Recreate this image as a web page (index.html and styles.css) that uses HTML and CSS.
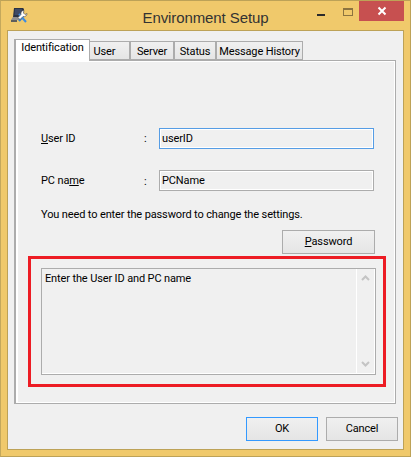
FILE: index.html
```html
<!DOCTYPE html>
<html lang="en">
<head>
<meta charset="utf-8">
<title>Environment Setup</title>
<link rel="stylesheet" href="styles.css">
</head>
<body>
<div class="window">
  <header class="titlebar">
    <svg class="app-icon" width="18" height="18" viewBox="0 0 18 18">
      <path d="M4 1h9l1 1-1 8H3z" fill="#2a3344"/>
      <path d="M5 2h7l-.8 6H4.400z" fill="#3d4a66"/>
      <path d="M3 10h8l-2 3H1z" fill="#8f8f8f"/>
      <path d="M1 13h6v2H1z" fill="#5d5d5d"/>
      <path d="M9 14 14 8" stroke="#2f7fd0" stroke-width="2.200" fill="none"/>
      <path d="M9 7l7 8" stroke="#3c8be0" stroke-width="2" fill="none"/>
      <path d="M14 3.500a3 3 0 0 0-3 4l-3 3 2 2 3-3a3 3 0 0 0 4-3l-2 1-1.500-1.500z" fill="#fff" stroke="#444" stroke-width=".6"/>
    </svg>
    <h1 class="title">Environment Setup</h1>
    <div class="controls">
      <span class="ctl"><span class="min"></span></span>
      <span class="ctl"><span class="max"></span></span>
      <span class="close">
        <svg width="10" height="10" viewBox="0 0 10 10"><path d="M1.500 1.500l7 7M8.500 1.500l-7 7" stroke="#fff" stroke-width="2"/></svg>
      </span>
    </div>
  </header>
  <main class="client">
    <nav class="tabs">
      <span class="tab active">Identification</span>
      <span class="tab t-user">User</span>
      <span class="tab t-server">Server</span>
      <span class="tab t-status">Status</span>
      <span class="tab t-msg">Message History</span>
    </nav>
    <section class="panel">
      <div class="form">
        <label class="lbl"><u>U</u>ser ID</label>
        <span class="colon">:</span>
        <div class="field focus">userID</div>
        <label class="lbl"><span>PC na<u>m</u>e</span></label>
        <span class="colon colon-low">:</span>
        <div class="field">PCName</div>
      </div>
      <p class="note">You need to enter the password to change the settings.</p>
      <div class="pw-row"><button class="btn pw"><u>P</u>assword</button></div>
      <div class="message">
        <div class="msg-text">Enter the User ID and PC name</div>
        <div class="scroll">
          <svg width="9" height="7" viewBox="0 0 9 7"><path d="M1 5l3.500-3.500L8 5" stroke="#c4c4c4" stroke-width="2" fill="none"/></svg>
          <svg width="9" height="7" viewBox="0 0 9 7"><path d="M1 2l3.500 3.500L8 2" stroke="#c4c4c4" stroke-width="2" fill="none"/></svg>
        </div>
      </div>
      <div class="highlight"></div>
    </section>
    <footer class="footer">
      <button class="btn ok">OK</button>
      <button class="btn">Cancel</button>
    </footer>
  </main>
</div>
</body>
</html>
```
FILE: styles.css
```css
* { box-sizing: border-box; }
html, body { margin: 0; padding: 0; background: #f0c96b; }
body { width: 411px; height: 457px; overflow: hidden; font-family: Roboto, "Liberation Sans", Arial, sans-serif; font-size: 11px; letter-spacing: -0.13px; color: #000; }
.window { width: 411px; height: 457px; border: 1px solid #bda257; border-left-color: #c4a85c; background: #f0c96b; display: flex; flex-direction: column; padding: 0 6px 6px 6px; }
.titlebar { height: 29px; display: flex; align-items: flex-start; position: relative; flex: none; }
.app-icon { margin: 6px 0 0 3px; flex: none; }
.title { flex: 1; margin: 7px 0 0 0; padding-left: 78px; text-align: center; font-weight: normal; font-size: 15px; line-height: 20px; font-family: "Liberation Sans", Arial, sans-serif; letter-spacing: -0.1px; color: #333; white-space: nowrap; }
.controls { display: flex; flex: none; }
.ctl { width: 27px; height: 20px; display: flex; align-items: center; justify-content: center; }
.min { width: 8px; height: 2px; background: #2b2b2b; margin-top: 7px; margin-left: 4px; }
.max { width: 10px; height: 8px; border: 1px solid #8c7440; border-top-width: 2px; margin-top: 2px; margin-left: 4px; }
.close { width: 45px; height: 20px; background: #c75050; display: flex; align-items: center; justify-content: center; }
.client { flex: 1; border: 1px solid #bda257; background: #f0f0f0; padding: 8px 7px 0 6px; display: flex; flex-direction: column; }
.tabs { display: flex; align-items: flex-end; height: 21px; flex: none; position: relative; z-index: 1; }
.tab { height: 19px; border: 1px solid #acacac; background: linear-gradient(#f0f0f0, #e5e5e5); line-height: 19px; text-align: center; white-space: nowrap; }
.tab.active { width: 76px; height: 22px; margin-bottom: -1px; background: #fff; border-left-width: 2px; border-bottom: 0; line-height: 15px; }
.tab.t-user { width: 40px; border-left-width: 0; padding-right: 10px; }
.t-server { width: 44px; }
.t-status { width: 42px; }
.t-msg { width: 87px; }
.panel { height: 344px; flex: none; border: 1px solid #acacac; border-left-width: 2px; box-shadow: inset 2px 1px 0 #fff, inset -1px -1px 0 #fff; background: #f0f0f0; padding: 67px 0 0 25px; position: relative; }
.form { display: grid; grid-template-columns: 103px 15px 215px; row-gap: 21px; align-items: center; }
.lbl { line-height: 21px; }
.colon { line-height: 21px; }
.colon-low { line-height: 23px; height: 21px; }
.field { height: 21px; border: 1px solid #acacac; box-shadow: inset -1px -1px 0 #fff, inset 1px 1px 0 #fff; line-height: 19px; padding-left: 2px; }
.field.focus { border-color: #569de5; }
.note { margin: 16px 0 0 0; line-height: 15px; height: 15px; white-space: nowrap; }
.pw-row { display: flex; justify-content: flex-end; margin-top: 8px; padding-right: 20px; }
.btn { height: 24px; width: 72px; border: 1px solid #acacac; background: linear-gradient(#f0f0f0, #e5e5e5); font: inherit; letter-spacing: inherit; color: #000; padding: 0 0 1px; }
.btn.pw { width: 93px; }
.btn.ok { border-color: #3399ff; }
.message { margin-top: 14px; width: 335px; height: 107px; border: 1px solid #acacac; box-shadow: inset -1px -1px 0 #fff; display: flex; }
.msg-text { flex: 1; padding: 2px 0 0 3px; line-height: 15px; }
.scroll { width: 18px; margin-bottom: 1px; margin-right: 1px; border-left: 1px solid #fff; display: flex; flex-direction: column; justify-content: space-between; align-items: center; padding: 6px 0 6px; }
.highlight { position: absolute; left: 12px; top: 195px; width: 358px; height: 131px; border: 3px solid #ed1c24; }
.footer { display: flex; justify-content: flex-end; gap: 8px; margin-top: 13px; margin-right: -2px; }
```
